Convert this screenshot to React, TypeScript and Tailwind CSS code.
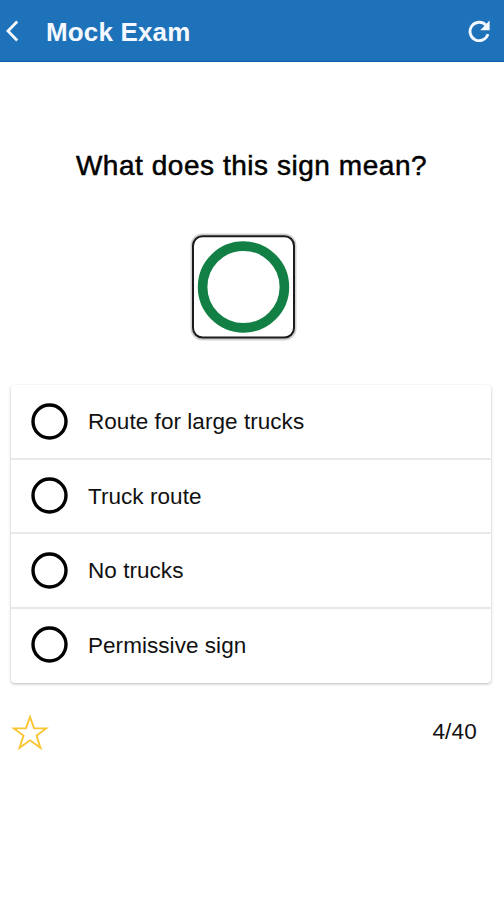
import React, { useState } from 'react';

const OPTIONS = ['Route for large trucks', 'Truck route', 'No trucks', 'Permissive sign'];

function Header() {
  return (
    <header className="flex h-[62px] items-center border-b border-[#0d5cae] bg-[#1e72b9] pl-[5px] pr-[13px] pt-[2px] text-[#f4f8ff]">
      <button aria-label="Back" className="h-[24px] w-[16px]">
        <svg viewBox="0 0 16 24" className="h-full w-full" fill="none" stroke="currentColor" strokeWidth="2.8">
          <path d="M12.2 1.6 3 11l9.2 9.4" />
        </svg>
      </button>
      <h1 className="ml-[25px] flex-1 text-[26px] leading-8 font-bold tracking-[0.15px]">Mock Exam</h1>
      <button aria-label="Restart" className="h-[24px] w-[24px]">
        <svg viewBox="0 0 24 24" className="h-full w-full" fill="none">
          <path d="M21 14.2A9.2 9.2 0 1 1 18.8 5" stroke="currentColor" strokeWidth="2.8" />
          <path d="M22.6 0.6V10.2h-9.4z" fill="currentColor" />
        </svg>
      </button>
    </header>
  );
}

// Green ring on a white plate
function PermissiveSign() {
  return (
    <svg viewBox="0 0 110 110" className="h-[110px] w-[110px]">
      <rect x="1.5" y="1.5" width="106" height="107" rx="12" fill="#d0d0d0" />
      <rect x="4" y="4.2" width="101" height="101.3" rx="9.5" fill="#fff" stroke="#1c1a1c" strokeWidth="2" />
      <circle cx="54.5" cy="55" r="40.9" fill="none" stroke="#128045" strokeWidth="9.6" />
    </svg>
  );
}

function Radio({ checked }: { checked: boolean }) {
  return (
    <svg viewBox="0 0 37 37" className="h-[37px] w-[37px] shrink-0">
      <circle cx="18.5" cy="18.5" r="16.5" fill="none" stroke="#000" strokeWidth="3.4" />
      {checked && <circle cx="18.5" cy="18.5" r="8" fill="#000" />}
    </svg>
  );
}

export default function App() {
  const [selected, setSelected] = useState<number | null>(null);
  const [starred, setStarred] = useState(false);

  return (
    <div className="flex min-h-screen flex-col bg-white font-['Liberation_Sans',Arial,sans-serif] text-[#111]">
      <Header />

      <main className="flex flex-col px-[11px]">
        <h2 className="mt-[86px] mr-[1px] text-center text-[28px] leading-9 tracking-[0.54px] text-black [-webkit-text-stroke:0.5px_black]">
          What does this sign mean?
        </h2>

        <div className="mt-[48px] mr-[16px] flex justify-center">
          <PermissiveSign />
        </div>

        {/* Answers */}
        <div className="mt-[43px] mr-[2px] rounded-[4px] bg-white shadow-[0_1px_3px_rgba(0,0,0,0.28)]">
          {OPTIONS.map((option, index) => (
            <button
              key={option}
              onClick={() => setSelected(index)}
              className="flex h-[74.5px] w-full items-center border-b-2 border-[#e8e8e8] pl-[20px] text-left last:border-b-0 last:pb-[2px]"
            >
              <Radio checked={selected === index} />
              <span className="ml-[20px] pt-[2px] text-[22.5px] leading-7 tracking-[0.05px]">{option}</span>
            </button>
          ))}
        </div>

        <div className="mt-[30px] flex items-center justify-between pr-[16px]">
          <button aria-label="Bookmark" onClick={() => setStarred(!starred)} className="h-[38px] w-[38px]">
            <svg viewBox="0 0 38 38" className="h-full w-full" fill={starred ? '#fbc02d' : 'none'} stroke="#fbc531" strokeWidth="1.9">
              <path d="M19 4 23.1 15.4H35.2L25.5 22.6 29.4 34.7 19 27.3 8.6 34.7 12.5 22.6 2.8 15.4H14.9Z" />
            </svg>
          </button>
          <span className="text-[22.5px] leading-7 tracking-[0.2px]">4/40</span>
        </div>
      </main>
    </div>
  );
}
